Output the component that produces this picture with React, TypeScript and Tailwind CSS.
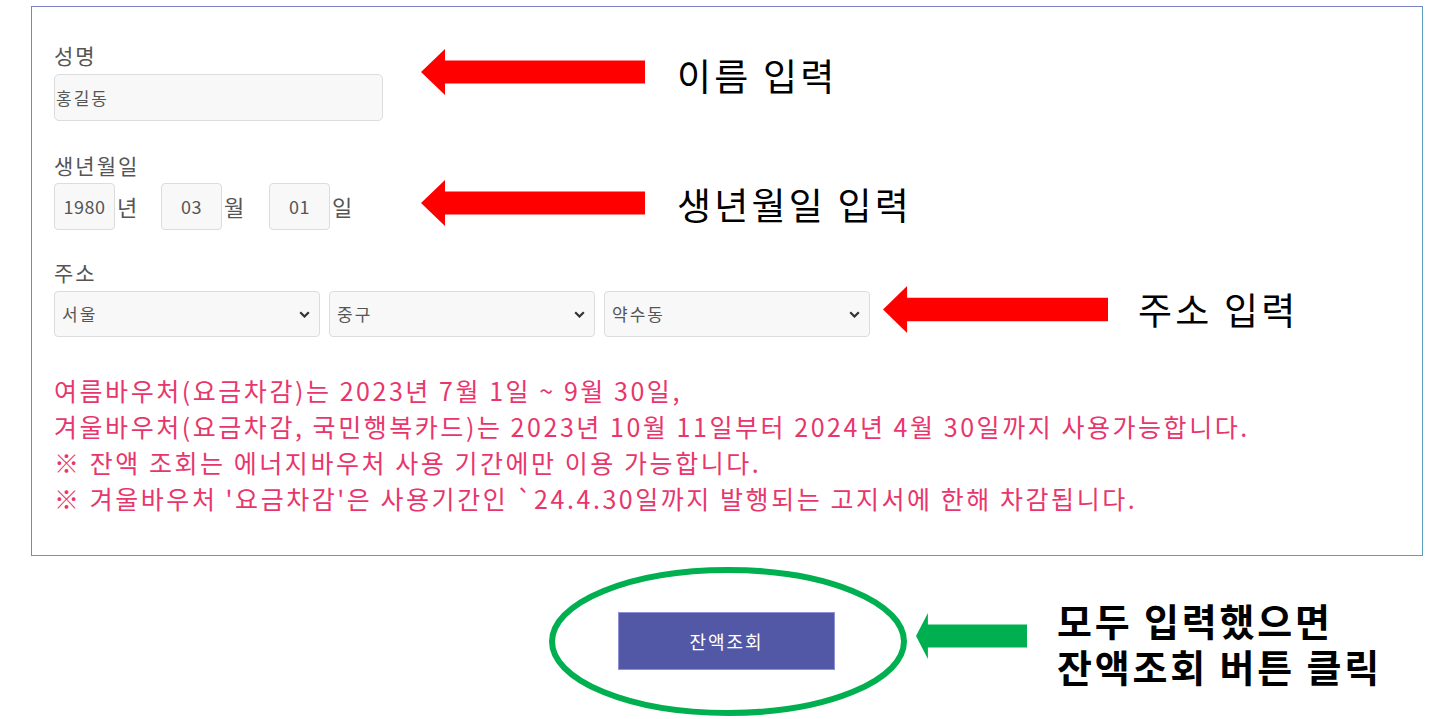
import { ReactNode } from 'react'

const kr = 'font-["Noto_Sans_CJK_KR","Noto_Sans",sans-serif]'

// 왼쪽을 가리키는 굵은 화살표
function ArrowLeft({ color, className }: { color: string; className: string }) {
    return (
        <svg className={className} viewBox="0 0 224 46" preserveAspectRatio="none">
            <polygon points="0,23 24,0 24,11.5 224,11.5 224,34.5 24,34.5 24,46" fill={color} />
        </svg>
    )
}

function Label({ children, className = '' }: { children: ReactNode; className?: string }) {
    return <div className={`text-[21px] leading-[24px] tracking-[2px] text-[#555] ${className}`}>{children}</div>
}

function DateBox({ value, unit, width }: { value: string; unit: string; width: string }) {
    return (
        <div className={`flex items-center ${width}`}>
            <div className="flex h-[47px] w-[61px] items-center justify-center rounded-[4px] border border-[#dcdcdc] bg-[#f8f8f8] text-[18px] tracking-[0.5px] text-[#555]">
                {value}
            </div>
            <span className="ml-[2px] text-[22px] text-[#555]">{unit}</span>
        </div>
    )
}

function SelectBox({ value }: { value: string }) {
    return (
        <div className="flex h-[46px] w-[266px] items-center justify-between rounded-[4px] border border-[#dcdcdc] bg-[#f8f8f8] pl-[7px] pr-[9px] text-[17px] tracking-[2px] text-[#555]">
            <span>{value}</span>
            <svg width="11" height="7" viewBox="0 0 11 7">
                <path d="M1.2 1.2l4.3 4.3 4.3-4.3" fill="none" stroke="#333" strokeWidth="2.2" />
            </svg>
        </div>
    )
}

export default function App() {
    const notice = [
        '여름바우처(요금차감)는 2023년 7월 1일 ~ 9월 30일,',
        '겨울바우처(요금차감, 국민행복카드)는 2023년 10월 11일부터 2024년 4월 30일까지 사용가능합니다.',
        '※ 잔액 조회는 에너지바우처 사용 기간에만 이용 가능합니다.',
        "※ 겨울바우처 '요금차감'은 사용기간인 `24.4.30일까지 발행되는 고지서에 한해 차감됩니다.",
    ]

    return (
        <div className={`relative h-[719px] w-[1456px] overflow-hidden bg-white ${kr}`}>
            <div className="pt-[6px] pl-[31px]">
                <div className="h-[550px] w-[1392px] border border-[#7a84c4] border-r-[#5a9fbd] border-b-[#5a9fbd] pl-[22px] pt-[36px]">
                    <Label>성명</Label>
                    <div className="mt-[7px] flex h-[47px] w-[329px] items-center rounded-[5px] border border-[#dcdcdc] bg-[#f8f8f8] pl-[1px] text-[17px] tracking-[2px] text-[#555]">
                        홍길동
                    </div>

                    <Label className="mt-[32px]">생년월일</Label>
                    <div className="mt-[6px] flex">
                        <DateBox value="1980" unit="년" width="w-[107px]" />
                        <DateBox value="03" unit="월" width="w-[108px]" />
                        <DateBox value="01" unit="일" width="w-[100px]" />
                    </div>

                    <Label className="mt-[30px]">주소</Label>
                    <div className="mt-[7px] flex gap-[9px]">
                        <SelectBox value="서울" />
                        <SelectBox value="중구" />
                        <SelectBox value="약수동" />
                    </div>

                    <div className="mt-[35px] text-[25px] leading-[36px] tracking-[2.55px] text-[#e8366d]">
                        {notice.map((line) => (
                            <p key={line} className="whitespace-pre">{line}</p>
                        ))}
                    </div>
                </div>
            </div>

            <button className="mt-[56px] ml-[618px] flex h-[58px] w-[217px] items-center justify-center border border-[#8e92d4] bg-[#5257a6] text-[18px] tracking-[2px] text-white">
                잔액조회
            </button>

            {/* 안내 표시 */}
            <ArrowLeft color="#ff0000" className="absolute left-[421px] top-[49px] h-[46px] w-[224px]" />
            <div className="absolute left-[677px] top-[57px] text-[37px] leading-[37px] tracking-[3.2px] text-black">이름 입력</div>

            <ArrowLeft color="#ff0000" className="absolute left-[421px] top-[180px] h-[46px] w-[224px]" />
            <div className="absolute left-[677px] top-[186px] text-[37px] leading-[37px] tracking-[3.2px] text-black">생년월일 입력</div>

            <ArrowLeft color="#ff0000" className="absolute left-[883px] top-[286px] h-[47px] w-[225px]" />
            <div className="absolute left-[1138px] top-[291px] text-[37px] leading-[37px] tracking-[3.2px] text-black">주소 입력</div>

            <svg className="absolute left-[546px] top-[564px] h-[155px] w-[364px]" viewBox="0 0 364 155">
                <ellipse cx="182" cy="77.5" rx="176" ry="71.5" fill="none" stroke="#00b050" strokeWidth="6" />
            </svg>
            <ArrowLeft color="#00b050" className="absolute left-[916px] top-[613px] h-[46px] w-[111px]" />
            <div className="absolute left-[1057px] top-[597px] text-[38px] font-bold leading-[46px] tracking-[2.8px] text-black">
                <p>모두 입력했으면</p>
                <p>잔액조회 버튼 클릭</p>
            </div>
        </div>
    )
}
